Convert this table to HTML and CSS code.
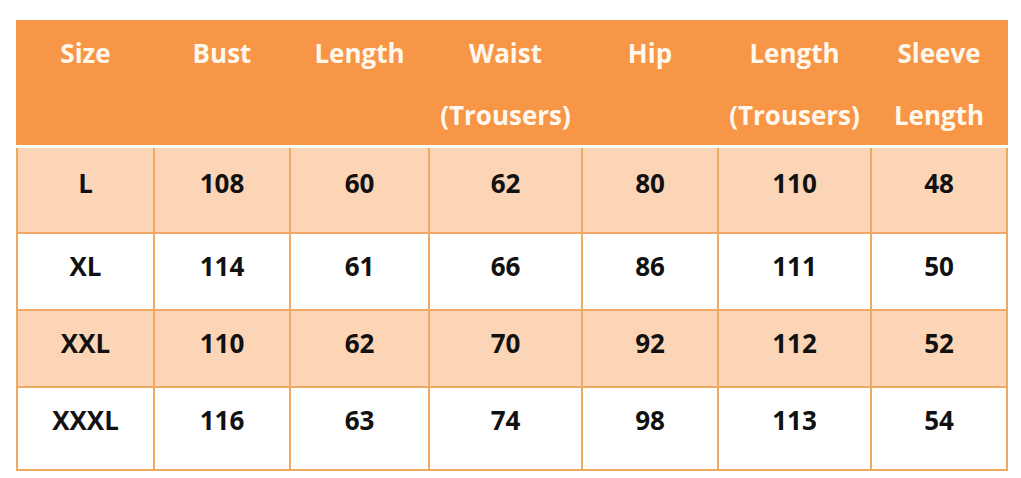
FILE: index.html
```html
<!DOCTYPE html>
<html lang="en">
<head>
<meta charset="utf-8">
<title>Size chart</title>
<link rel="stylesheet" href="styles.css">
</head>
<body>
<div class="page">
  <div class="chart">
    <div class="head">
      <div class="hcell">Size</div>
      <div class="hcell">Bust</div>
      <div class="hcell">Length</div>
      <div class="hcell">Waist<br>(Trousers)</div>
      <div class="hcell">Hip</div>
      <div class="hcell">Length<br>(Trousers)</div>
      <div class="hcell">Sleeve<br>Length</div>
    </div>
    <div class="body">
      <div class="cell shade r1">L</div><div class="cell shade r1">108</div><div class="cell shade r1">60</div><div class="cell shade r1">62</div><div class="cell shade r1">80</div><div class="cell shade r1">110</div><div class="cell shade r1">48</div>
      <div class="cell">XL</div><div class="cell">114</div><div class="cell">61</div><div class="cell">66</div><div class="cell">86</div><div class="cell">111</div><div class="cell">50</div>
      <div class="cell shade">XXL</div><div class="cell shade">110</div><div class="cell shade">62</div><div class="cell shade">70</div><div class="cell shade">92</div><div class="cell shade">112</div><div class="cell shade">52</div>
      <div class="cell">XXXL</div><div class="cell">116</div><div class="cell">63</div><div class="cell">74</div><div class="cell">98</div><div class="cell">113</div><div class="cell">54</div>
    </div>
  </div>
</div>
</body>
</html>
```

FILE: styles.css
```css
html, body {
  margin: 0;
  padding: 0;
  background: #ffffff;
}

.page {
  padding: 20px 0 0 16px;
  font-family: "Open Sans", "Liberation Sans", sans-serif;
  font-weight: 700;
  font-size: 26px;
}

.chart {
  width: 992px;
}

.head {
  display: grid;
  grid-template-columns: 135px 134px 137px 151px 134px 151px 134px;
  column-gap: 2px;
  padding: 0 2px;
  height: 125px;
  background: #f79646;
  border-bottom: 3px solid #ffffff;
}

.hcell {
  color: #fff8ee;
  text-align: center;
  line-height: 62px;
  padding-top: 2px;
  white-space: nowrap;
}

.body {
  display: grid;
  grid-template-columns: 135px 134px 137px 151px 134px 151px 134px;
  grid-template-rows: 84px 75px 75px 81px;
  gap: 2px;
  background: #f0a865;
  border: 2px solid #f0a865;
  border-top: 0;
}

.cell {
  background: #ffffff;
  color: #111111;
  text-align: center;
  line-height: 36px;
  padding-top: 14px;
}

.cell.shade {
  background: #fbd5b5;
}

.cell.r1 {
  padding-top: 17px;
}
```
